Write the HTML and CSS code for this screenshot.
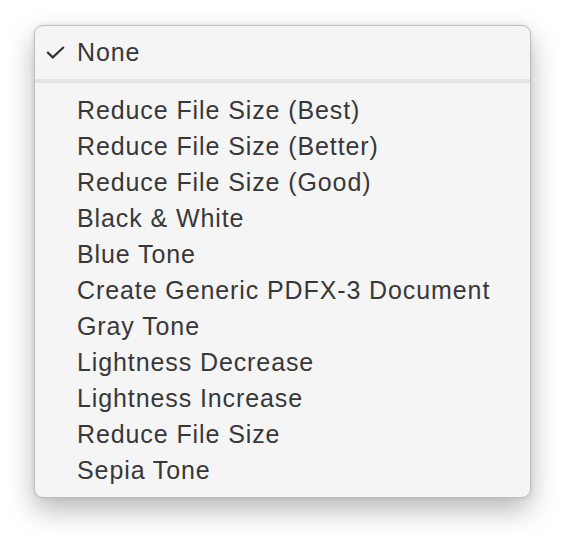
FILE: index.html
```html
<!DOCTYPE html>
<html>
<head>
<meta charset="utf-8">
<link rel="stylesheet" href="styles.css">
</head>
<body>
<div class="menu">
  <div class="item checked">
    <span class="check"><svg width="19" height="13" viewBox="0 0 19 13"><path d="M1.2 6 L6.8 11.4 L17.8 1" fill="none" stroke="#333333" stroke-width="2.2"/></svg></span>
    <span class="label">None</span>
  </div>
  <div class="sep"></div>
  <div class="item"><span class="check"></span><span class="label">Reduce File Size (Best)</span></div>
  <div class="item"><span class="check"></span><span class="label">Reduce File Size (Better)</span></div>
  <div class="item"><span class="check"></span><span class="label">Reduce File Size (Good)</span></div>
  <div class="item"><span class="check"></span><span class="label">Black &amp; White</span></div>
  <div class="item"><span class="check"></span><span class="label">Blue Tone</span></div>
  <div class="item"><span class="check"></span><span class="label">Create Generic PDFX-3 Document</span></div>
  <div class="item"><span class="check"></span><span class="label">Gray Tone</span></div>
  <div class="item"><span class="check"></span><span class="label">Lightness Decrease</span></div>
  <div class="item"><span class="check"></span><span class="label">Lightness Increase</span></div>
  <div class="item"><span class="check"></span><span class="label">Reduce File Size</span></div>
  <div class="item"><span class="check"></span><span class="label">Sepia Tone</span></div>
</div>
</body>
</html>
```
FILE: styles.css
```css
html, body {
  margin: 0;
  padding: 0;
  background: #ffffff;
  min-height: 540px;
}
body {
  font-family: "Liberation Sans", Arial, sans-serif;
  padding: 25px 0 0 34px;
  box-sizing: border-box;
}
.menu {
  box-sizing: border-box;
  width: 497px;
  height: 473px;
  background: #f5f5f5;
  border: 1px solid #bfbfbf;
  border-radius: 9px;
  box-shadow: 0 12px 28px rgba(0, 0, 0, 0.28), 0 0 4px rgba(0, 0, 0, 0.1);
  padding: 8px 0 8px 0;
  display: flex;
  flex-direction: column;
}
.item {
  height: 36px;
  display: flex;
  align-items: center;
  color: #383838;
  font-size: 25px;
  letter-spacing: 0.9px;
  line-height: 36px;
}
.check {
  width: 42px;
  display: flex;
  align-items: center;
  padding-left: 11px;
  box-sizing: border-box;
}
.check svg {
  display: block;
  margin-top: 1px;
}
.sep {
  height: 4px;
  background: #e4e4e4;
  margin: 9px 0 9px 0;
}
```
